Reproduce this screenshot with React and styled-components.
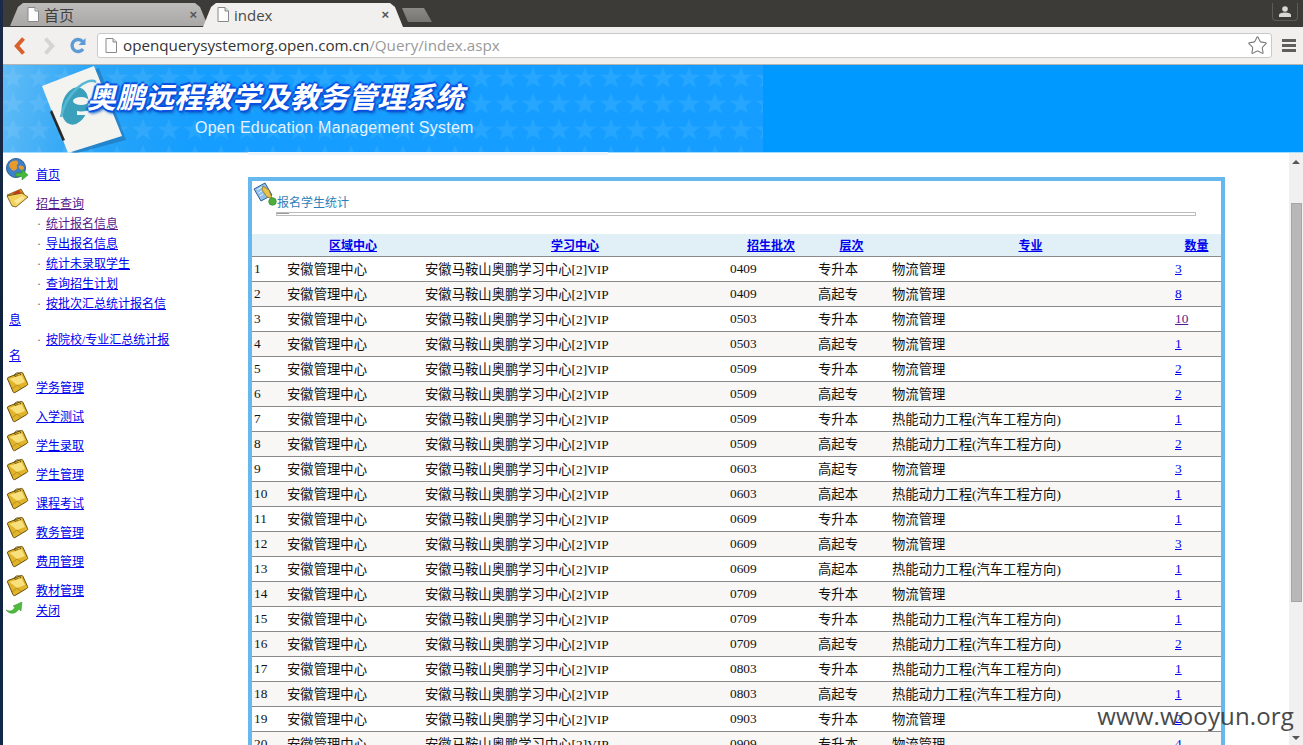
import React from "react";
import styled, { createGlobalStyle } from "styled-components";
import { Star } from "lucide-react";

const GlobalStyle = createGlobalStyle`
  html, body {
    margin: 0;
    padding: 0;
    height: 745px;
    overflow: hidden;
    background: #fff;
  }
`;

const CJK = `"Liberation Serif", "Noto Sans CJK SC", serif`;
const UI = `"Open Sans", "Noto Sans CJK SC", sans-serif`;

const starTile = encodeURIComponent(
  `<svg xmlns="http://www.w3.org/2000/svg" width="26" height="26"><polygon points="13,2 15.8,9.6 24,9.8 17.5,14.8 20,22.6 13,18 6,22.6 8.5,14.8 2,9.8 10.2,9.6" fill="#ffffff" fill-opacity="0.08"/></svg>`
);

const Shell = styled.div`
  display: flex;
  width: 1303px;
  height: 745px;
  overflow: hidden;
  position: relative;
`;

const DesktopEdge = styled.div`
  width: 3px;
  flex: none;
  background: linear-gradient(#1a2a4a, #0d2038 60%, #12294a);
`;

const Window = styled.div`
  flex: 1;
  min-width: 0;
  display: flex;
  flex-direction: column;
`;

const TabBar = styled.div`
  height: 27px;
  flex: none;
  display: flex;
  align-items: flex-end;
  padding-left: 7px;
  background: #3c3b37;
`;

const Tab = styled.div`
  width: ${(p) => (p.$active ? "200px" : "198px")};
  height: ${(p) => (p.$active ? "24px" : "23px")};
  margin-left: ${(p) => (p.$active ? "-5px" : "0")};
  margin-bottom: ${(p) => (p.$active ? "0" : "1px")};
  padding: 0 ${(p) => (p.$active ? "14px" : "11px")} 1px ${(p) => (p.$active ? "14px" : "17px")};
  box-sizing: border-box;
  display: flex;
  align-items: center;
  gap: 5px;
  font: 15px ${UI};
  color: ${(p) => (p.$active ? "#4a4a4a" : "#3f3f3f")};
  background: ${(p) =>
    p.$active ? "#f1f0ee" : "linear-gradient(#bdbcba, #a9a8a6)"};
  clip-path: polygon(0 100%, 8px 4px, 13px 0, calc(100% - 13px) 0, calc(100% - 8px) 4px, 100% 100%);
  position: relative;
  z-index: ${(p) => (p.$active ? 1 : 0)};
`;

const TabTitle = styled.span`
  flex: 1;
`;

const TabClose = styled.span`
  font: bold 13px "Liberation Sans", sans-serif;
  color: #555;
`;

const NewTab = styled.div`
  width: 30px;
  height: 14px;
  margin: 0 0 5px -1px;
  background: linear-gradient(#8b8a87, #777673);
  clip-path: polygon(0 0, 22px 0, 30px 100%, 6px 100%);
`;

const Spacer = styled.div`
  flex: 1;
`;

const ProfileButton = styled.div`
  width: 24px;
  height: 17px;
  margin: 0 5px 6px 0;
  border: 1px solid #5c5b57;
  border-top: none;
  border-radius: 0 0 4px 4px;
  display: flex;
  align-items: center;
  justify-content: center;
`;

const Toolbar = styled.div`
  height: 37px;
  flex: none;
  display: flex;
  align-items: center;
  padding: 0 7px 0 2px;
  background: #f1f0ee;
  border-bottom: 1px solid #b4b4b4;
`;

const NavButton = styled.div`
  width: 29px;
  height: 22px;
  display: flex;
  align-items: center;
  justify-content: center;
`;

const Omnibox = styled.div`
  flex: 1;
  height: 25px;
  margin: 0 10px 0 5px;
  padding: 0 3px 1px 7px;
  box-sizing: border-box;
  display: flex;
  align-items: center;
  gap: 6px;
  background: #fff;
  border: 1px solid #c9c9c9;
  border-radius: 3px;
  font: 15.2px ${UI};
  color: #333;
`;

const UrlHost = styled.span`
  flex: 1;
  white-space: nowrap;
`;

const UrlPath = styled.span`
  color: #999;
`;

const MenuBars = styled.div`
  width: 14px;
  height: 13px;
  border-top: 3px solid #5e5e5e;
  border-bottom: 3px solid #5e5e5e;
  box-sizing: border-box;
  position: relative;
  &::after {
    content: "";
    position: absolute;
    left: 0;
    right: 0;
    top: 2px;
    height: 3px;
    background: #5e5e5e;
  }
`;

const Banner = styled.header`
  height: 88px;
  box-sizing: border-box;
  flex: none;
  position: relative;
  background: #0099ff;
  border-bottom: 1px solid #9fdcff;
`;

const BannerArt = styled.div`
  width: 760px;
  height: 100%;
  padding: 13px 0 0 84px;
  box-sizing: border-box;
  background:
    url("data:image/svg+xml,${starTile}") -3px 0 repeat,
    linear-gradient(100deg, #62bcf6 0, #2ba5f6 90px, #159eff 200px);
  &::after {
    content: "";
    position: absolute;
    left: 245px;
    top: 100%;
    width: 360px;
    height: 3px;
    background: #e9f4fb;
  }
`;

const BannerTitle = styled.div`
  position: relative;
  font: italic bold 29px/34px "Noto Sans CJK SC", sans-serif;
  color: #fff;
  white-space: nowrap;
  text-shadow:
    -2px 0 1px #0a4fe0, 2px 0 1px #0a4fe0, 0 -2px 1px #0a4fe0, 0 2px 1px #0a4fe0,
    2px 3px 3px #0c5fc0;
`;

const BannerSub = styled.div`
  margin: 6px 0 0 108px;
  font: 16px/20px "Liberation Sans", sans-serif;
  letter-spacing: 0.26px;
  color: #e4f3ff;
  white-space: nowrap;
`;

const LogoArt = styled.svg`
  position: absolute;
  left: 30px;
  top: 0;
`;

const Viewport = styled.div`
  flex: 1;
  min-height: 0;
  display: flex;
  overflow: hidden;
`;

const SideNav = styled.nav`
  width: 245px;
  flex: none;
  padding: 1px 0 0 3px;
  box-sizing: border-box;
  font: 12px/16px ${CJK};
`;

const NavRow = styled.div`
  height: ${(p) => p.$height || 29}px;
  display: flex;
  align-items: flex-end;
`;

const NavIcon = styled.div`
  width: 30px;
  height: 100%;
  flex: none;
  display: flex;
  align-items: ${(p) => (p.$top ? "flex-start" : "flex-end")};
  padding: ${(p) => (p.$top ? `${p.$top}px 0 0 0` : `0 0 ${p.$bottom || 2}px 0`)};
  box-sizing: border-box;
`;

const Link = styled.a`
  color: ${(p) => (p.$visited ? "#551a8b" : "#0000ee")};
  text-decoration: underline;
  cursor: pointer;
`;

const SubList = styled.div`
  width: 166px;
  margin: 4px 0 -1px 3px;
`;

const SubItem = styled.div`
  margin-bottom: 4px;
  text-indent: 28px;
`;

const Dot = styled.span`
  display: inline-block;
  width: 9px;
  text-indent: 0;
  color: #666;
`;

const Content = styled.main`
  flex: 1;
  min-width: 0;
  padding-top: 24px;
`;

const StatsBox = styled.section`
  width: 977px;
  box-sizing: border-box;
  border: 4px solid #66b8ef;
  background: #fff;
`;

const BoxHead = styled.div`
  height: 53px;
  position: relative;
  padding: 14px 0 0 25px;
  box-sizing: border-box;
  font: 12px/16px ${CJK};
  color: #2b80b9;
`;

const HeadIcon = styled.svg`
  position: absolute;
  left: 1px;
  top: 1px;
`;

const Rule = styled.div`
  width: 920px;
  height: 4px;
  margin-top: 1px;
  box-sizing: border-box;
  border: 1px solid #bcbcbc;
  position: relative;
  left: -1px;
  &::before {
    content: "";
    position: absolute;
    left: 0;
    top: 0;
    width: 12px;
    height: 1px;
    background: #9a9a9a;
  }
`;

const Table = styled.table`
  width: 969px;
  table-layout: fixed;
  border-collapse: separate;
  border-spacing: 0;
  font: 13.33px/16px ${CJK};
  color: #111;
`;

const Th = styled.th`
  height: 23px;
  box-sizing: border-box;
  padding: 2px 0 0;
  font: bold 12px/16px ${CJK};
  text-align: center;
  background: #e1eff7;
  border-bottom: 1px solid #8a8a8a;
`;

const Td = styled.td`
  height: 25px;
  box-sizing: border-box;
  padding: ${(p) => (p.$latin ? 0 : 2)}px 0 0 ${(p) => p.$pad || 2}px;
  white-space: nowrap;
  background: ${(p) => (p.$odd ? "#f8f7f5" : "#fff")};
  border-bottom: 1px solid #8a8a8a;
`;

const Scrollbar = styled.aside`
  width: 14px;
  flex: none;
  display: flex;
  flex-direction: column;
  align-items: center;
  background: #f0f0f0;
`;

const Arrow = styled.div`
  width: 0;
  height: 0;
  border-left: 4px solid transparent;
  border-right: 4px solid transparent;
  ${(p) =>
    p.$down
      ? "border-top: 4px solid #555; margin-bottom: 5px;"
      : "border-bottom: 4px solid #555; margin-top: 7px;"}
`;

const Thumb = styled.div`
  width: 11px;
  height: 399px;
  margin: 39px 0 0 1px;
  box-sizing: border-box;
  background: #b8b8b8;
  border: 1px solid #a6a6a6;
`;

const Watermark = styled.div`
  position: absolute;
  right: 9px;
  bottom: 13px;
  font: 24px/32px "Open Sans", sans-serif;
  letter-spacing: 0.15px;
  color: #3a3a3a;
  opacity: 0.92;
`;

const PageGlyph = () => (
  <svg width="12" height="15" viewBox="0 0 12 15">
    <path d="M1 .5h7l3.5 3.5v10.500H1z" fill="#fdfdfd" stroke="#8a8a8a" />
    <path d="M8 .5V4h3.500" fill="#ddd" stroke="#8a8a8a" />
  </svg>
);

const GlobeIcon = () => (
  <svg width="23" height="22" viewBox="0 0 23 22">
    <circle cx="10" cy="10" r="9.500" fill="#3f7fc4" stroke="#2c5c94" />
    <path d="M4 5c3-3 7-3 8-1s-2 3-1 5-3 5-5 3-4-5-2-7zM13 8c2-1 5 0 5 2s-2 3-3 2-3-3-2-4z" fill="#e89a2c" />
    <path d="M10 15h6v-3.500l6 5.500-6 5v-3.500h-6z" fill="#46b83c" stroke="#2f8a2c" strokeWidth=".5" />
  </svg>
);

const OpenFolderIcon = () => (
  <svg width="23" height="20" viewBox="0 0 23 20">
    <path d="M1 7l14-6 3 5-12 5z" fill="#c98f1e" stroke="#6b4a10" strokeWidth=".7" />
    <path d="M7 5l6-3 3 5-6 3z" fill="#d0341c" />
    <path d="M1 8l15-3 6 4-12 10-4-1z" fill="#f4d25e" stroke="#6b4a10" strokeWidth=".8" />
    <path d="M8 13l8-5 3 2-8 6z" fill="#fbe79a" />
  </svg>
);

const FolderIcon = () => (
  <svg width="23" height="23" viewBox="0 0 23 23">
    <path d="M2 6.500L15 1.500c1-.3 1.500 0 2 1l4.500 10c.4 1 .2 1.500-.8 2L9 21.500c-1 .4-1.500.2-2-.8L1.500 8c-.3-.8 0-1.200.5-1.500z" fill="#e2b42a" stroke="#66500f" />
    <path d="M8 4.500C9 2 12 1 14 2.500l1 2-2 1c-1-1-2-1-3 0z" fill="none" stroke="#66500f" strokeWidth="1" />
    <path d="M3.500 8l7.500 6 8-3-3.500-7z" fill="#f8e07c" />
    <path d="M6 18l5-4 4 3" fill="none" stroke="#ba8f1e" />
  </svg>
);

const CloseIcon = () => (
  <svg width="17" height="12" viewBox="0 0 17 12">
    <path d="M0 8c4 2 7 1 9-3L7 4l9-4-1 9-2-2C10 12 4 13 0 8z" fill="#4fbb3c" stroke="#2f8f2c" strokeWidth=".5" />
  </svg>
);

const NAV_GROUPS = ["学务管理", "入学测试", "学生录取", "学生管理", "课程考试", "教务管理", "费用管理", "教材管理"];

const SUB_ITEMS = [
  { label: "统计报名信息", visited: true },
  { label: "导出报名信息" },
  { label: "统计未录取学生" },
  { label: "查询招生计划" },
  { label: "按批次汇总统计报名信息" },
  { label: "按院校/专业汇总统计报名" },
];

const WULIU = "物流管理";
const RENENG = "热能动力工程(汽车工程方向)";

const ROWS = [
  ["0409", "专升本", WULIU, 3],
  ["0409", "高起专", WULIU, 8],
  ["0503", "专升本", WULIU, 10],
  ["0503", "高起专", WULIU, 1],
  ["0509", "专升本", WULIU, 2],
  ["0509", "高起专", WULIU, 2],
  ["0509", "专升本", RENENG, 1],
  ["0509", "高起专", RENENG, 2],
  ["0603", "高起专", WULIU, 3],
  ["0603", "高起本", RENENG, 1],
  ["0609", "专升本", WULIU, 1],
  ["0609", "高起专", WULIU, 3],
  ["0609", "高起本", RENENG, 1],
  ["0709", "专升本", WULIU, 1],
  ["0709", "专升本", RENENG, 1],
  ["0709", "高起专", RENENG, 2],
  ["0803", "专升本", RENENG, 1],
  ["0803", "高起专", RENENG, 1],
  ["0903", "专升本", WULIU, 2],
  ["0909", "专升本", WULIU, 4],
];

const COLUMNS = [
  { width: 32, title: "" },
  { width: 138, title: "区域中心" },
  { width: 306, title: "学习中心" },
  { width: 86, title: "招生批次" },
  { width: 75, title: "层次" },
  { width: 283, title: "专业" },
  { width: 49, title: "数量" },
];

export default function App() {
  return (
    <Shell>
      <GlobalStyle />
      <DesktopEdge />
      <Window>
        <TabBar>
          <Tab>
            <PageGlyph />
            <TabTitle>首页</TabTitle>
            <TabClose>×</TabClose>
          </Tab>
          <Tab $active>
            <PageGlyph />
            <TabTitle>index</TabTitle>
            <TabClose>×</TabClose>
          </Tab>
          <NewTab />
          <Spacer />
          <ProfileButton>
            <svg width="12" height="11" viewBox="0 0 12 11">
              <circle cx="6" cy="3" r="2.800" fill="#d8d8d4" />
              <path d="M0 11V9c0-1.500 2-2.500 6-2.500s6 1 6 2.500v2z" fill="#d8d8d4" />
            </svg>
          </ProfileButton>
        </TabBar>
        <Toolbar>
          <NavButton>
            <svg width="12" height="18" viewBox="0 0 12 18">
              <path d="M9.500 1.500L2.800 9l6.700 7.500" fill="none" stroke="#d8602a" strokeWidth="4" />
            </svg>
          </NavButton>
          <NavButton>
            <svg width="12" height="18" viewBox="0 0 12 18">
              <path d="M2.500 1.500L9.200 9l-6.700 7.500" fill="none" stroke="#d4d4d2" strokeWidth="4" />
            </svg>
          </NavButton>
          <NavButton>
            <svg width="17" height="17" viewBox="0 0 17 17">
              <path d="M14 12a6 6 0 1 1-.5-7.500" fill="none" stroke="#5e9bd6" strokeWidth="3.400" />
              <path d="M16.500 1v7h-7z" fill="#5e9bd6" />
            </svg>
          </NavButton>
          <Omnibox>
            <PageGlyph />
            <UrlHost>
              openquerysystemorg.open.com.cn<UrlPath>/Query/index.aspx</UrlPath>
            </UrlHost>
            <Star size={21} strokeWidth={1.2} color="#777" />
          </Omnibox>
          <MenuBars />
        </Toolbar>
        <Banner>
          <BannerArt>
            <LogoArt width="100" height="88" viewBox="0 0 100 88">
              <path d="M13 25L66 3l27 72-53 14z" fill="#1f5f96" opacity=".45" />
              <path d="M9 21L61 1l28 70-54 17z" fill="#f3f3f0" />
              <path d="M19 45l13 30-2.500 1L17 47z" fill="#2a2a2a" />
              <ellipse cx="42" cy="41" rx="13" ry="19" transform="rotate(15 42 41)" fill="#3ba0bc" />
              <ellipse cx="48" cy="36" rx="8" ry="4" fill="#f3f3f0" />
              <path d="M44 46c4 1 10 0 14-1v5H44z" fill="#f3f3f0" />
              <path d="M28 52C33 28 54 11 63 17" fill="none" stroke="#54b8d4" strokeWidth="2.500" />
            </LogoArt>
            <BannerTitle>奥鹏远程教学及教务管理系统</BannerTitle>
            <BannerSub>Open Education Management System</BannerSub>
          </BannerArt>
        </Banner>
        <Viewport>
          <SideNav>
            <NavRow>
              <NavIcon $top={4}>
                <GlobeIcon />
              </NavIcon>
              <Link>首页</Link>
            </NavRow>
            <NavRow>
              <NavIcon $bottom={4}>
                <OpenFolderIcon />
              </NavIcon>
              <Link $visited>招生查询</Link>
            </NavRow>
            <SubList>
              {SUB_ITEMS.map((item) => (
                <SubItem key={item.label}>
                  <Dot>·</Dot>
                  <Link $visited={item.visited}>{item.label}</Link>
                </SubItem>
              ))}
            </SubList>
            {NAV_GROUPS.map((name) => (
              <NavRow key={name}>
                <NavIcon>
                  <FolderIcon />
                </NavIcon>
                <Link>{name}</Link>
              </NavRow>
            ))}
            <NavRow $height={20}>
              <NavIcon $bottom={5}>
                <CloseIcon />
              </NavIcon>
              <Link>关闭</Link>
            </NavRow>
          </SideNav>
          <Content>
            <StatsBox>
              <BoxHead>
                <HeadIcon width="25" height="25" viewBox="0 0 25 25">
                  <path d="M1 7l11-6 7 12-11 6z" fill="#8fc0ea" stroke="#2f5f96" />
                  <path d="M4 8l5-3M5.500 11l5-3M7 14l3-2" stroke="#e8f3fb" />
                  <path d="M10 4l6 4 3 8-5-1-5-7z" fill="#e8c24a" stroke="#8a6a14" strokeWidth=".7" />
                  <circle cx="19.500" cy="19.500" r="3.800" fill="#4cae3c" stroke="#2e7d2a" strokeWidth=".6" />
                </HeadIcon>
                报名学生统计
                <Rule />
              </BoxHead>
              <Table>
                <colgroup>
                  {COLUMNS.map((c, i) => (
                    <col key={i} width={c.width} />
                  ))}
                </colgroup>
                <thead>
                  <tr>
                    {COLUMNS.map((c, i) => (
                      <Th key={i}>{c.title && <Link>{c.title}</Link>}</Th>
                    ))}
                  </tr>
                </thead>
                <tbody>
                  {ROWS.map((r, i) => {
                    const odd = i % 2 === 1;
                    return (
                      <tr key={i}>
                        <Td $odd={odd} $latin>{i + 1}</Td>
                        <Td $odd={odd} $pad={3}>安徽管理中心</Td>
                        <Td $odd={odd} $pad={3}>安徽马鞍山奥鹏学习中心[2]VIP</Td>
                        <Td $odd={odd} $latin>{r[0]}</Td>
                        <Td $odd={odd} $pad={4}>{r[1]}</Td>
                        <Td $odd={odd} $pad={3}>{r[2]}</Td>
                        <Td $odd={odd} $pad={3} $latin>
                          <Link $visited={r[3] === 10}>{r[3]}</Link>
                        </Td>
                      </tr>
                    );
                  })}
                </tbody>
              </Table>
            </StatsBox>
          </Content>
          <Scrollbar>
            <Arrow />
            <Thumb />
            <Spacer />
            <Arrow $down />
          </Scrollbar>
        </Viewport>
      </Window>
      <Watermark>www.wooyun.org</Watermark>
    </Shell>
  );
}
